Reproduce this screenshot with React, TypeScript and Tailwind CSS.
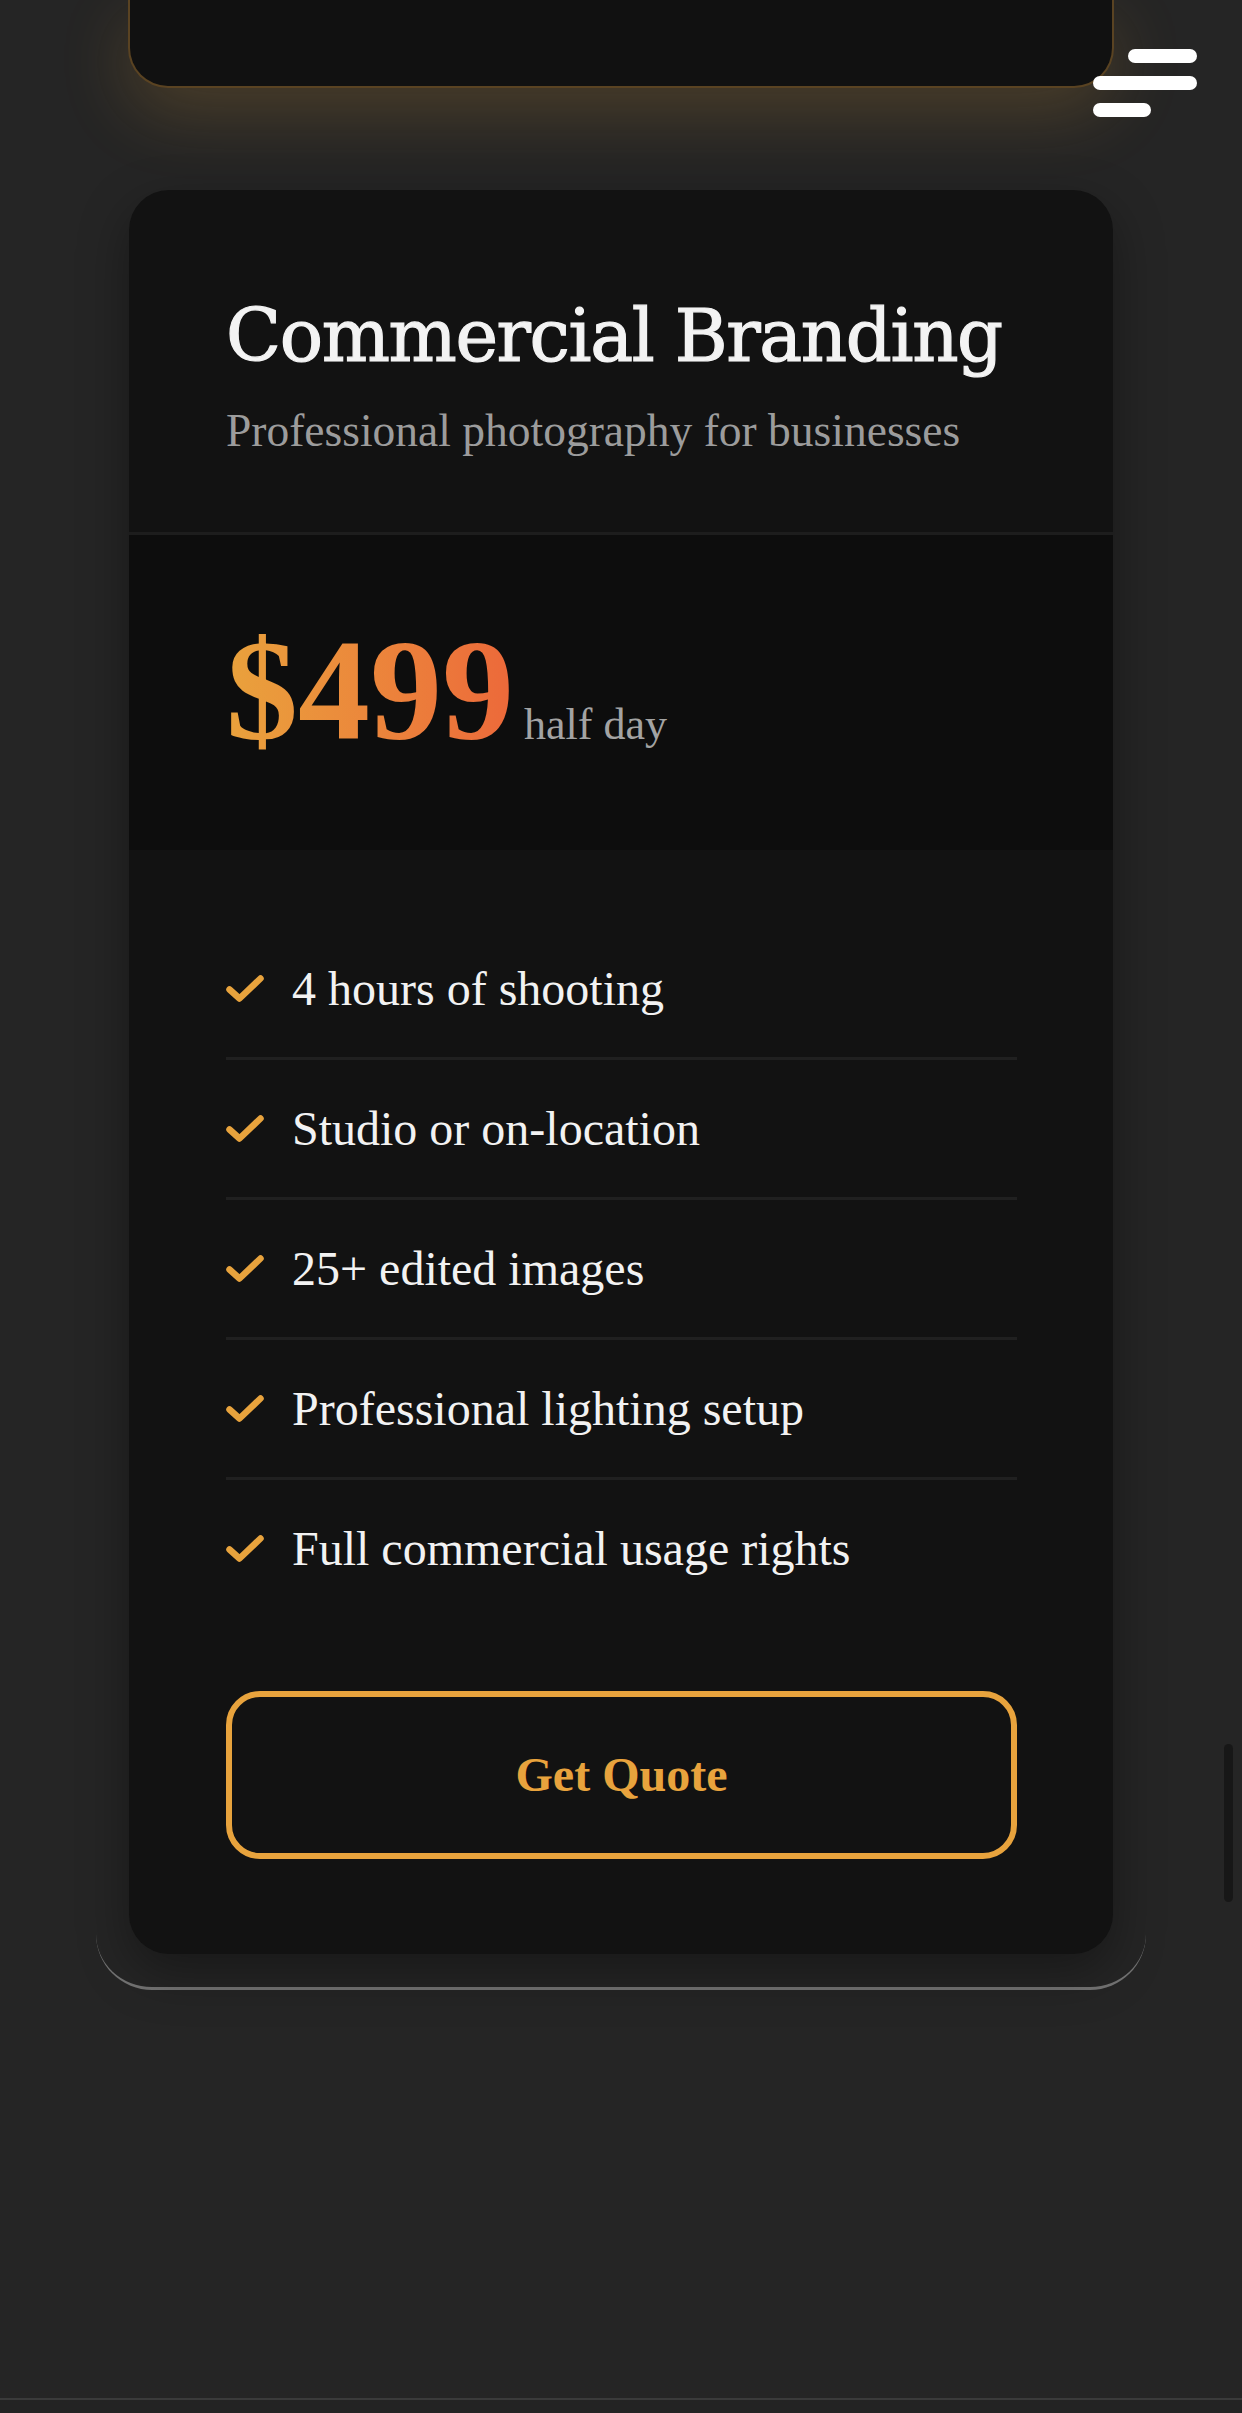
import React from "react";

const features = [
  "4 hours of shooting",
  "Studio or on-location",
  "25+ edited images",
  "Professional lighting setup",
  "Full commercial usage rights",
];

function Check() {
  return (
    <svg width="38" height="27" viewBox="0 0 38 27" fill="none" className="shrink-0">
      <path d="M3.5 14.5 L13.5 23.5 L34.5 3.5" stroke="#E8A33D" strokeWidth="6.5" strokeLinecap="round" strokeLinejoin="round" />
    </svg>
  );
}

export default function App() {
  return (
    <div className="relative w-full min-h-[2413px] overflow-hidden bg-[#252525] font-['Liberation_Serif','Times_New_Roman',serif]">
      <div className="flex flex-col items-center">
        {/* previous card (cut off) */}
        <div className="h-[88px] w-[986px] rounded-b-[40px] border-x-2 border-b-2 border-[#5a4322] bg-[#111111] shadow-[0_24px_70px_rgba(232,163,61,0.2)]" />

        {/* frame */}
        <div className="mt-[69px] w-[1050px] rounded-b-[56px] border-b-[3px] border-[#747474] px-[33px] pt-[33px] pb-[33px]">
          <div className="w-[984px] overflow-hidden rounded-[40px] bg-[#121212] shadow-[0_18px_50px_rgba(0,0,0,0.35)]">
            {/* header */}
            <div className="px-[97px] pt-[103px] pb-[67px]">
              <h2 className="whitespace-nowrap font-['DejaVu_Serif',serif] text-[72px] leading-[86px] font-normal tracking-[-1.4px] text-[#f3f3f3] [-webkit-text-stroke:1.2px_#f3f3f3]">
                Commercial Branding
              </h2>
              <p className="mt-[18px] whitespace-nowrap text-[45.5px] leading-[68px] text-[#9c9c9c]">
                Professional photography for businesses
              </p>
            </div>
            <div className="h-[3px] bg-[#1d1d1d]" />
            {/* price */}
            <div className="bg-[#0d0d0d] px-[97px] pt-[84px] pb-[87px]">
              <div className="flex items-baseline">
                <span className="bg-gradient-to-r from-[#E9A23C] to-[#EC683A] bg-clip-text text-[144px] font-bold leading-[144px] text-transparent">
                  $499
                </span>
                <span className="ml-[10px] text-[44px] leading-[68px] text-[#a3a3a3]">half day</span>
              </div>
            </div>
            {/* features */}
            <div className="pl-[97px] pr-[96px] pt-[70px] pb-[95px]">
              <ul>
                {features.map((f, i) => (
                  <li
                    key={f}
                    className={
                      i < features.length - 1
                        ? "flex h-[140px] items-center gap-[28px] border-b-[3px] border-[#202020]"
                        : "flex h-[137px] items-center gap-[28px]"
                    }
                  >
                    <Check />
                    <span className="text-[48px] leading-[72px] text-[#f2f2f2]">{f}</span>
                  </li>
                ))}
              </ul>
              <button className="mt-[74px] flex h-[168px] w-full items-center justify-center rounded-[34px] border-[6px] border-[#E8A33D] bg-transparent text-[48px] font-bold text-[#E8A33D]">
                Get Quote
              </button>
            </div>
          </div>
        </div>

        <div className="mt-[408px] h-[15px] w-full border-t-2 border-[#3a3a3a] bg-[#232323]" />
      </div>

      {/* hamburger button */}
      <div className="absolute left-[1093px] top-[49px] flex w-[104px] flex-col items-end gap-[13px]">
        <span className="block h-[14px] w-[69px] rounded-full bg-white" />
        <span className="block h-[14px] w-[104px] rounded-full bg-white" />
        <span className="block h-[14px] w-[58px] self-start rounded-full bg-white" />
      </div>

      {/* scrollbar thumb */}
      <div className="absolute left-[1224px] top-[1744px] h-[158px] w-[9px] rounded-full bg-[#171717]" />
    </div>
  );
}
